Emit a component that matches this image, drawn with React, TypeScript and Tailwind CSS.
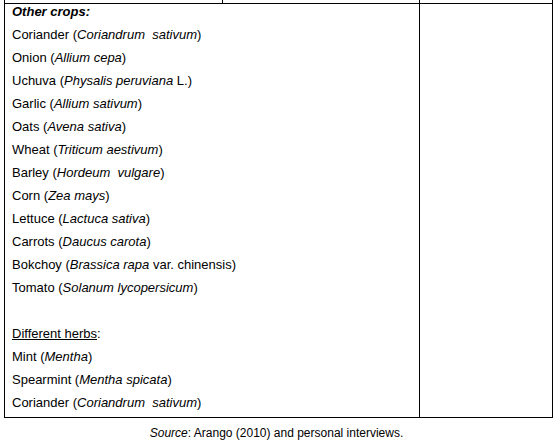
const rows: { name: string; latin: string; tail?: string }[] = [
  { name: 'Coriander', latin: 'Coriandrum  sativum' },
  { name: 'Onion', latin: 'Allium cepa' },
  { name: 'Uchuva', latin: 'Physalis peruviana', tail: ' L.' },
  { name: 'Garlic', latin: 'Allium sativum' },
  { name: 'Oats', latin: 'Avena sativa' },
  { name: 'Wheat', latin: 'Triticum aestivum' },
  { name: 'Barley', latin: 'Hordeum  vulgare' },
  { name: 'Corn', latin: 'Zea mays' },
  { name: 'Lettuce', latin: 'Lactuca sativa' },
  { name: 'Carrots', latin: 'Daucus carota' },
  { name: 'Bokchoy', latin: 'Brassica rapa', tail: ' var. chinensis' },
  { name: 'Tomato', latin: 'Solanum lycopersicum' },
];

const herbs = [
  { name: 'Mint', latin: 'Mentha' },
  { name: 'Spearmint', latin: 'Mentha spicata' },
  { name: 'Coriander', latin: 'Coriandrum  sativum' },
];

function Line({ name, latin, tail }: { name: string; latin: string; tail?: string }) {
  return (
    <div className="h-[23px] leading-[15px] whitespace-pre">
      {name} (<i>{latin}</i>
      {tail})
    </div>
  );
}

export default function App() {
  return (
    <div className="w-[557px] h-[445px] bg-white text-black font-['Liberation_Sans',Arial,sans-serif] text-[13px]">
      <div className="ml-[4px] w-[549px]">
        <div className="flex h-[3px]">
          <div className="w-[218px] border-l border-black" />
          <div className="w-[197px] border-l border-black" />
          <div className="w-[134px] border-x border-black" />
        </div>
        <div className="flex h-[415px] border border-black">
          <div className="w-[415px] border-r border-black pl-[7px]">
            <div className="h-[23px] leading-[15px] font-bold italic">Other crops:</div>
            {rows.map((r) => (
              <Line key={r.name} {...r} />
            ))}
            <div className="h-[23px]" />
            <div className="h-[23px] leading-[15px]">
              <span className="underline">Different herbs</span>:
            </div>
            {herbs.map((r) => (
              <Line key={r.name} {...r} />
            ))}
          </div>
          <div className="flex-1" />
        </div>
      </div>
      <div className="w-[553px] mt-[8px] text-center text-[12px] leading-[15px]">
        <i>Source</i>: Arango (2010) and personal interviews.
      </div>
    </div>
  );
}
